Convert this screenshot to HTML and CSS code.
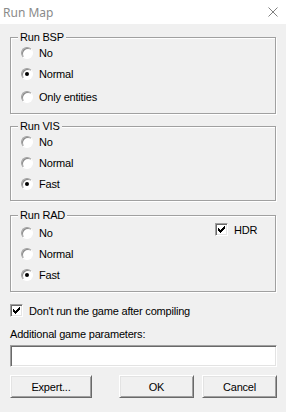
FILE: index.html
```html
<!DOCTYPE html>
<html lang="en">
<head>
    <meta charset="UTF-8">
    <meta name="viewport" content="width=device-width, initial-scale=1.0">
    <title>Run Map</title>
    <link rel="stylesheet" href="styles.css">
</head>
<body>
    <div class="titlebar">
        <span class="title">Run Map</span>
        <svg class="close" width="10" height="10" viewBox="0 0 10 10">
            <path d="M0.5 0.5L9.5 9.5M9.5 0.5L0.5 9.5" stroke="#808080" stroke-width="1" fill="none"/>
        </svg>
    </div>

    <div class="dialog">
        <div class="group">
            <div class="group-title">Run BSP</div>
            <div class="option"><span class="radio"></span>No</div>
            <div class="option"><span class="radio checked"></span>Normal</div>
            <div class="option option-spaced"><span class="radio"></span>Only entities</div>
        </div>

        <div class="group">
            <div class="group-title">Run VIS</div>
            <div class="option"><span class="radio"></span>No</div>
            <div class="option"><span class="radio"></span>Normal</div>
            <div class="option"><span class="radio checked"></span>Fast</div>
        </div>

        <div class="group group-rad">
            <div class="group-title">Run RAD</div>
            <div class="rad-body">
                <div class="radios">
                    <div class="option"><span class="radio"></span>No</div>
                    <div class="option"><span class="radio"></span>Normal</div>
                    <div class="option"><span class="radio checked"></span>Fast</div>
                </div>
                <div class="check hdr">
                    <span class="checkbox">
                        <svg width="7" height="7" viewBox="0 0 7 7" shape-rendering="crispEdges">
                            <path d="M6 0h1v1h-1z M5 1h2v1h-2z M0 2h1v1h-1z M4 2h3v1h-3z M0 3h2v1h-2z M3 3h3v1h-3z M0 4h5v1h-5z M1 5h3v1h-3z M2 6h1v1h-1z" fill="#000"/>
                        </svg>
                    </span>HDR
                </div>
            </div>
        </div>

        <div class="check no-run">
            <span class="checkbox">
                <svg width="7" height="7" viewBox="0 0 7 7" shape-rendering="crispEdges">
                    <path d="M6 0h1v1h-1z M5 1h2v1h-2z M0 2h1v1h-1z M4 2h3v1h-3z M0 3h2v1h-2z M3 3h3v1h-3z M0 4h5v1h-5z M1 5h3v1h-3z M2 6h1v1h-1z" fill="#000"/>
                </svg>
            </span>Don't run the game after compiling
        </div>

        <div class="field-label">Additional game parameters:</div>
        <div class="textbox"></div>

        <div class="buttons">
            <div class="button button-expert">Expert...</div>
            <div class="button button-ok">OK</div>
            <div class="button button-cancel">Cancel</div>
        </div>
    </div>
</body>
</html>
```

FILE: styles.css
```css
body {
    margin: 0;
    width: 286px;
    height: 412px;
    background-color: #f0f0f0;
    font-family: "Liberation Sans", Arial, sans-serif;
    font-size: 11px;
    letter-spacing: -0.2px;
    color: #000;
    overflow: hidden;
}
.titlebar {
    height: 24px;
    background-color: #fff;
    display: flex;
    align-items: center;
    justify-content: space-between;
    padding: 0 8px 0 3px;
}
.title {
    font-family: "Noto Sans", sans-serif;
    font-size: 12px;
    letter-spacing: 0;
    color: #8a8a8a;
}
.close {
    display: block;
}
.dialog {
    padding: 13px 10px 0 10px;
}
.group {
    border: 1px solid #a0a0a0;
    box-shadow: 1px 1px 0 #fff, inset 1px 1px 0 #fff;
    padding: 1px 10px 9px 10px;
    margin-bottom: 12px;
}
.group-rad {
    margin-top: 14px;
}
.group-title {
    width: fit-content;
    margin: -8px 0 -5px -3px;
    padding: 0 2px;
    line-height: 13px;
    background-color: #f0f0f0;
}
.option {
    display: flex;
    align-items: center;
    height: 14px;
    margin-top: 7px;
}
.option-spaced {
    margin-top: 9px;
}
.radio {
    width: 12px;
    height: 12px;
    box-sizing: border-box;
    border-radius: 50%;
    border: 1px solid;
    border-color: #a0a0a0 #fff #fff #a0a0a0;
    box-shadow: inset 1px 1px 0 #8a8a8a;
    background-color: #fff;
    margin-right: 6px;
    display: flex;
    align-items: center;
    justify-content: center;
}
.radio.checked::after {
    content: "";
    width: 4px;
    height: 4px;
    border-radius: 50%;
    background-color: #000;
}
.rad-body {
    display: flex;
    margin-top: 2px;
}
.radios {
    width: 194px;
}
.check {
    display: flex;
    align-items: center;
    height: 13px;
}
.hdr {
    margin-top: 4px;
}
.no-run {
    margin-top: 12px;
}
.checkbox {
    width: 13px;
    height: 13px;
    box-sizing: border-box;
    border: 1px solid;
    border-color: #a0a0a0 #fff #fff #a0a0a0;
    box-shadow: inset 1px 1px 0 #696969, inset -1px -1px 0 #e3e3e3;
    background-color: #fff;
    display: flex;
    align-items: center;
    justify-content: center;
    margin-right: 6px;
}
.checkbox svg {
    display: block;
}
.field-label {
    margin-top: 11px;
    line-height: 13px;
}
.textbox {
    width: 267px;
    height: 22px;
    box-sizing: border-box;
    margin-top: 4px;
    background-color: #fff;
    border: 1px solid;
    border-color: #a0a0a0 #fff #fff #a0a0a0;
    box-shadow: inset 1px 1px 0 #696969, inset -1px -1px 0 #e3e3e3;
}
.buttons {
    display: flex;
    margin-top: 8px;
    width: 267px;
}
.button {
    height: 23px;
    width: 75px;
    box-sizing: border-box;
    display: flex;
    align-items: center;
    justify-content: center;
    background-color: #f0f0f0;
    border: 1px solid;
    border-color: #fff #696969 #696969 #fff;
    box-shadow: inset 1px 1px 0 #e3e3e3, inset -1px -1px 0 #a0a0a0;
}
.button-expert {
    width: 82px;
}
.button-ok {
    margin-left: auto;
    margin-right: 8px;
}
```
